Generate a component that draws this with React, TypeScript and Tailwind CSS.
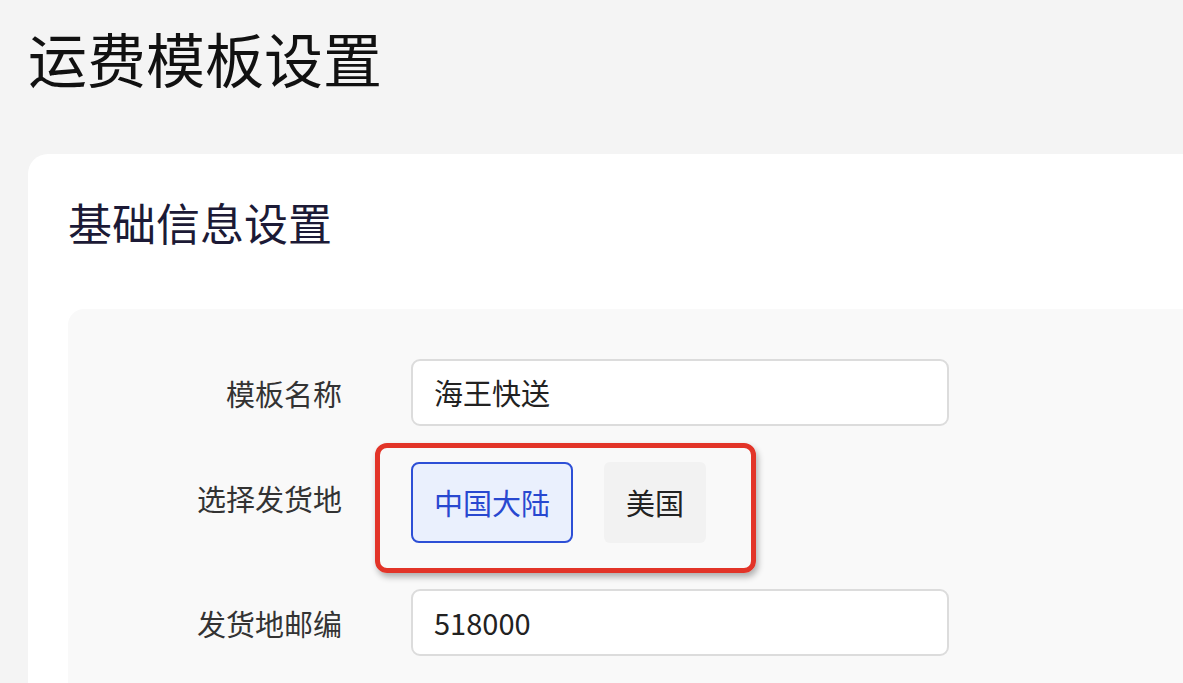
import React from "react";

const font = { fontFamily: '"Noto Sans CJK SC", "Noto Sans", sans-serif' };

export default function App() {
  return (
    <div className="w-[1183px] h-[683px] overflow-hidden bg-[#f4f4f4] text-[#333]" style={font}>
      <h1 className="pl-[28px] pt-[21px] text-[59px] leading-[74px] text-[#111] font-normal">
        运费模板设置
      </h1>
      <div className="ml-[28px] mt-[59px] bg-white rounded-tl-[20px] h-[600px] pl-[40px] pt-[40px]">
        <h2 className="text-[44px] leading-[56px] text-[#1c1a36] font-normal">基础信息设置</h2>
        <div className="mt-[59px] bg-[#f9f9f9] rounded-tl-[16px] h-[400px] pt-[50px]">
          <div className="flex items-center">
            <div className="w-[274px] text-right text-[29px] leading-[40px] text-[#333]">模板名称</div>
            <div className="ml-[69px] w-[538px] h-[67px] bg-white border-2 border-[#dcdcdc] rounded-[9px] flex items-center pl-[21px] text-[29px] text-[#222]">
              海王快送
            </div>
          </div>
          <div className="flex items-center mt-[36px]">
            <div className="w-[274px] text-right text-[29px] leading-[40px] text-[#333] -mt-[10px]">选择发货地</div>
            <div className="ml-[69px] relative flex gap-[31px]">
              <div className="w-[162px] h-[81px] bg-[#eaf0fd] border-2 border-[#2d4fd6] rounded-[8px] flex items-center justify-center text-[29px] text-[#2848d0]">
                中国大陆
              </div>
              <div className="w-[102px] h-[81px] bg-[#f2f2f2] rounded-[6px] flex items-center justify-center text-[29px] text-[#222]">
                美国
              </div>
              <div className="absolute left-[-36px] top-[-19px] w-[381px] h-[130px] border-[5px] border-[#e23428] rounded-[12px] shadow-[2px_4px_6px_rgba(0,0,0,0.3)]" />
            </div>
          </div>
          <div className="flex items-center mt-[46px]">
            <div className="w-[274px] text-right text-[29px] leading-[40px] text-[#333]">发货地邮编</div>
            <div className="ml-[69px] w-[538px] h-[67px] bg-white border-2 border-[#dcdcdc] rounded-[9px] flex items-center pl-[21px] text-[29px] text-[#222]">
              518000
            </div>
          </div>
        </div>
      </div>
    </div>
  );
}
